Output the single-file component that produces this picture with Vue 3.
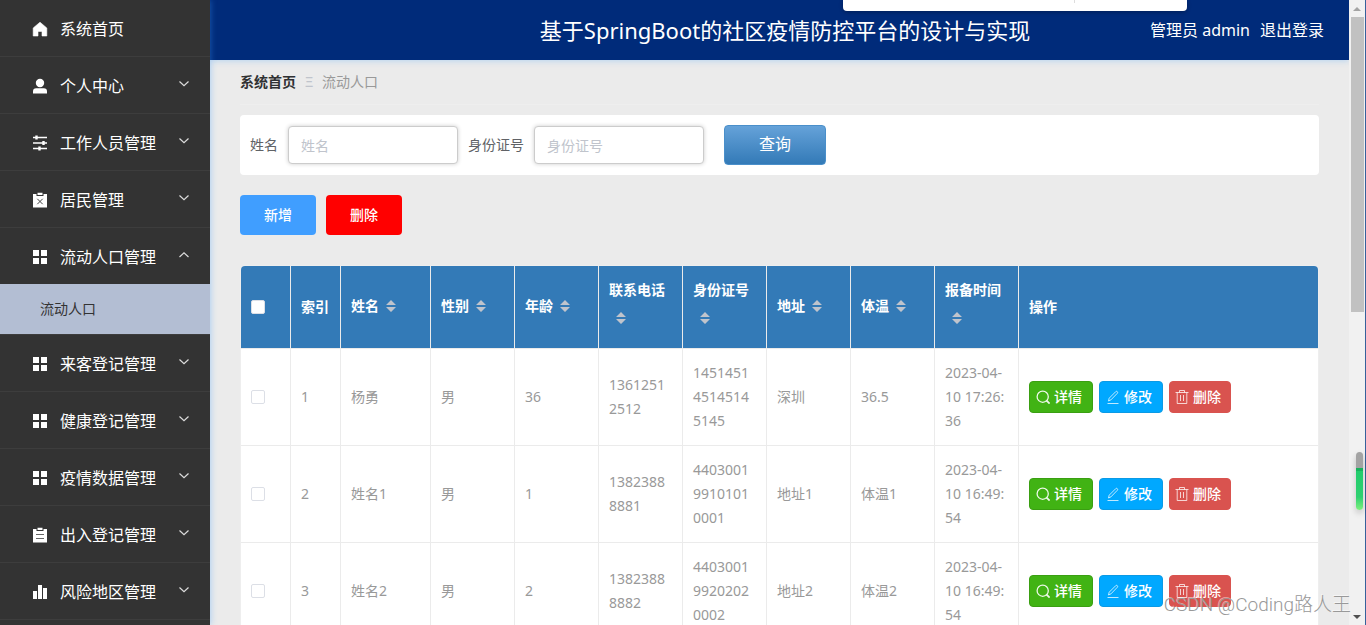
<script setup>
import { ref } from 'vue'

const menu = [
  { label: '系统首页', icon: 'home' },
  { label: '个人中心', icon: 'user', sub: true },
  { label: '工作人员管理', icon: 'sliders', sub: true },
  { label: '居民管理', icon: 'clip-x', sub: true },
  { label: '流动人口管理', icon: 'grid', sub: true, children: ['流动人口'] },
  { label: '来客登记管理', icon: 'grid', sub: true },
  { label: '健康登记管理', icon: 'grid', sub: true },
  { label: '疫情数据管理', icon: 'grid', sub: true },
  { label: '出入登记管理', icon: 'clip', sub: true },
  { label: '风险地区管理', icon: 'bars', sub: true },
]
const columns = ['姓名', '性别', '年龄', '联系电话', '身份证号', '地址', '体温', '报备时间']
const rows = [
  ['1', '杨勇', '男', '36', '13612512512', '145145145145145145', '深圳', '36.5', '2023-04-10 17:26:36'],
  ['2', '姓名1', '男', '1', '13823888881', '440300199101010001', '地址1', '体温1', '2023-04-10 16:49:54'],
  ['3', '姓名2', '男', '2', '13823888882', '440300199202020002', '地址2', '体温2', '2023-04-10 16:49:54'],
]
const name = ref('')
const idNo = ref('')
</script>

<template>
  <div class="layout">
    <nav class="sidebar">
      <ul>
        <li v-for="m in menu" :key="m.label">
          <a href="#" class="item">
            <svg class="icon" viewBox="0 0 16 16" aria-hidden="true">
              <path v-if="m.icon === 'home'" d="M8 1.2 1.2 7v8H6v-4.6h4V15h4.8V7z" fill="#fff" stroke="#fff" stroke-width=".6" stroke-linejoin="round" />
              <path v-else-if="m.icon === 'user'" d="M8 .8a4.2 4.2 0 1 1 0 8.400A4.200 4.200 0 0 1 8 .8zM1 15.500V13.500Q1 10.300 4.200 10.300H11.800Q15 10.300 15 13.500V15.500z" fill="#fff" />
              <g v-else-if="m.icon === 'sliders'" stroke="#fff" stroke-width="1.500" fill="none">
                <path d="M1 2.500h14M1 8h14M1 13.500h14" /><path d="M4.500 .5v4M11.500 6v4M7.500 11.500v4" stroke-width="2.400" />
              </g>
              <g v-else-if="m.icon === 'clip-x'">
                <path d="M1 2H4.500V4h7V2H15v13.500H1zM5.500 .8h5v2.200h-5z" fill="#fff" /><path d="m5.300 6.800 5.400 5.400m0-5.400-5.400 5.400" stroke="#444" stroke-width="1" />
              </g>
              <g v-else-if="m.icon === 'clip'">
                <path d="M1 2H4.500V4h7V2H15v13.500H1zM5.500 .8h5v2.200h-5z" fill="#fff" /><path d="M4 7.500h8M4 11.500h8" stroke="#666" />
              </g>
              <path v-else-if="m.icon === 'grid'" d="M1 1h6v6H1zM9 1h6v6H9zM1 9h6v6H1zM9 9h6v6H9z" fill="#fff" />
              <path v-else d="M1 7h4v8H1zM6 1h4v14H6zM11 4h4v11h-4z" fill="#fff" />
            </svg>
            <span class="label">{{ m.label }}</span>
            <svg v-if="m.sub" class="arrow" viewBox="0 0 12 12" aria-hidden="true">
              <path :d="m.children ? 'M1.500 8 6 3.800 10.500 8' : 'M1.500 3.500 6 7.700 10.500 3.500'" fill="none" stroke="#ddd" stroke-width="1.200" />
            </svg>
          </a>
          <a v-for="c in m.children" :key="c" href="#" class="child">{{ c }}</a>
        </li>
      </ul>
    </nav>

    <div class="page">
      <header class="header">
        <h1>基于SpringBoot的社区疫情防控平台的设计与实现</h1>
        <div class="account">
          <span>管理员 admin</span>
          <a href="#">退出登录</a>
        </div>
      </header>

      <main class="main">
        <div class="crumbs">
          <a href="#">系统首页</a><span class="sep">Ξ</span><span class="here">流动人口</span>
        </div>

        <form class="search" @submit.prevent>
          <label for="f-name">姓名</label>
          <input id="f-name" v-model="name" type="text" placeholder="姓名" />
          <label for="f-id">身份证号</label>
          <input id="f-id" v-model="idNo" type="text" placeholder="身份证号" />
          <button type="submit">查询</button>
        </form>

        <div class="actions">
          <button type="button" class="add">新增</button>
          <button type="button" class="remove">删除</button>
        </div>

        <table>
          <colgroup>
            <col class="c-small" /><col class="c-small" /><col class="c-name" />
            <col v-for="n in 7" :key="n" class="c-mid" />
            <col />
          </colgroup>
          <thead>
            <tr>
              <th><input type="checkbox" aria-label="全选" /></th>
              <th>索引</th>
              <th v-for="c in columns" :key="c">
                {{ c }}<span class="caret"><svg viewBox="0 0 10 12" aria-hidden="true"><path d="M0 5 5 0l5 5zM0 7h10l-5 5z" fill="#c0c4cc" /></svg></span>
              </th>
              <th>操作</th>
            </tr>
          </thead>
          <tbody>
            <tr v-for="r in rows" :key="r[0]">
              <td><input type="checkbox" :aria-label="'选择 ' + r[1]" /></td>
              <td v-for="(v, i) in r" :key="i">{{ v }}</td>
              <td>
                <div class="ops">
                  <button type="button" class="view">
                    <svg viewBox="0 0 14 14" aria-hidden="true"><circle cx="6.700" cy="6.700" r="5.600" /><path d="m10.600 10.600 3 3" stroke-width="1.800" /></svg>详情
                  </button>
                  <button type="button" class="edit">
                    <svg viewBox="0 0 14 14" aria-hidden="true"><path d="M1.500 13.500h11M2.500 11 3.200 8.200 9.700 1.700q.8-.8 1.600 0t0 1.600L4.900 9.900z" /></svg>修改
                  </button>
                  <button type="button" class="del">
                    <svg viewBox="0 0 14 14" aria-hidden="true"><path d="M.5 2.500h13M4.500 2.500V.5h5v2M2.200 2.500v11h9.600v-11M5.500 5v6M8.500 5v6" /></svg>删除
                  </button>
                </div>
              </td>
            </tr>
          </tbody>
        </table>
      </main>
    </div>

    <div class="scroll">
      <span class="up"></span>
      <span class="thumb"></span>
      <span class="down"></span>
    </div>

    <div class="popup"><span></span></div>
    <div class="meter"></div>
    <div class="mark">CSDN @Coding路人王</div>
  </div>
</template>

<style>
body {
  margin: 0;
  overflow: hidden;
}
</style>

<style scoped>
.layout {
  position: relative;
  display: flex;
  height: 100vh;
  overflow: hidden;
  background: #ebebeb;
  font: 14px/24px "Noto Sans", "Noto Sans CJK SC", sans-serif;
  color: #606266;
}
* {
  box-sizing: border-box;
}
a {
  color: inherit;
  text-decoration: none;
}
button,
input {
  font: inherit;
}
button {
  padding: 0;
  border: 0;
  border-radius: 4px;
  color: #fff;
  cursor: pointer;
}
.sidebar {
  flex: none;
  width: 210px;
  background: #333;
  box-shadow: 1px 0 6px rgba(64, 158, 255, 0.35);
  z-index: 1;
}
.sidebar ul {
  margin: 0;
  padding: 0;
  list-style: none;
}
.sidebar li {
  border-bottom: 1px solid #3d3d3d;
}
.item {
  display: flex;
  align-items: center;
  height: 56px;
  padding: 2px 20px 0 32px;
  font-size: 16px;
  color: #fff;
}
.icon {
  width: 16px;
  height: 16px;
  margin-right: 12px;
}
.label {
  flex: 1;
}
.arrow {
  width: 12px;
  height: 12px;
  margin-bottom: 4px;
}
.child {
  display: block;
  padding-left: 40px;
  line-height: 50px;
  background: #b3bed3;
  color: #333;
}
.page {
  flex: 1;
  min-width: 0;
}
.header {
  display: grid;
  grid-template-columns: 1fr auto 1fr;
  align-items: center;
  height: 60px;
  padding: 0 25px 0 36px;
  background: #002b7a;
  box-shadow: 0 1px 6px rgba(64, 158, 255, 0.3);
  color: #fff;
}
.header h1 {
  grid-column: 2;
  margin: 0;
  font-size: 22px;
  font-weight: 400;
}
.account {
  display: flex;
  justify-content: flex-end;
  gap: 10px;
  font-size: 16px;
}
.main {
  padding: 10px 30px;
}
.crumbs {
  display: flex;
  height: 35px;
  border-bottom: 1px solid #eee;
}
.crumbs a {
  font-weight: 700;
  color: #303133;
}
.sep {
  width: 26px;
  text-align: center;
  color: #c0c4cc;
}
.here {
  color: #999;
}
.search {
  display: flex;
  align-items: center;
  gap: 10px;
  height: 60px;
  margin-top: 10px;
  padding: 0 10px;
  border-radius: 4px;
  background: #fff;
}
.search input {
  width: 170px;
  height: 38px;
  padding: 0 12px;
  border: 1px solid #ccc;
  border-radius: 4px;
  box-shadow: 0 0 4px rgba(0, 0, 0, 0.2);
}
.search input::placeholder {
  color: #c0c4cc;
}
.search button {
  width: 102px;
  height: 40px;
  margin-left: 10px;
  padding-bottom: 2px;
  border: 1px solid #4a8fca;
  background: linear-gradient(#65a2d9, #337ab7);
  font-size: 16px;
}
.actions {
  display: flex;
  gap: 10px;
  margin: 20px 0 30px;
}
.actions button {
  width: 76px;
  height: 40px;
  font-weight: 500;
}
.actions .add {
  background: #409eff;
}
.actions .remove {
  background: #f00;
}
table {
  width: 100%;
  table-layout: fixed;
  border-collapse: separate;
  border-spacing: 0;
  border: 1px solid #eee;
  border-radius: 5px;
  overflow: hidden;
  background: #fff;
}
.c-small {
  width: 50px;
}
.c-name {
  width: 90px;
}
.c-mid {
  width: 84px;
}
th,
td {
  padding: 12px 10px;
  border-right: 1px solid #ebebeb;
  border-bottom: 1px solid #ebebeb;
  text-align: left;
  vertical-align: middle;
  word-break: break-all;
}
th:last-child,
td:last-child {
  border-right: 0;
}
th {
  background: #337ab7;
  color: #fff;
  font-weight: 700;
}
td {
  color: #999;
}
.caret {
  display: inline-flex;
  align-items: center;
  justify-content: center;
  width: 24px;
  height: 34px;
  padding-bottom: 2px;
  vertical-align: middle;
}
.caret svg {
  width: 10px;
  height: 12px;
}
table input {
  appearance: none;
  display: block;
  width: 14px;
  height: 14px;
  margin: 0;
  border: 1px solid #dcdfe6;
  border-radius: 2px;
  background: #fff;
}
.ops {
  display: flex;
  gap: 6px;
}
.ops button {
  display: flex;
  align-items: center;
  gap: 4px;
  width: 64px;
  height: 32px;
  padding-left: 6px;
  border: 1px solid;
  font-weight: 500;
}
.ops svg {
  width: 14px;
  height: 14px;
  fill: none;
  stroke: rgba(255, 255, 255, 0.75);
  stroke-width: 1;
}
.ops .view {
  background: #41b314;
  border-color: #3a9f12;
}
.ops .view svg {
  stroke: rgba(255, 255, 255, 0.9);
  stroke-width: 1.3;
}
.ops .edit {
  background: #00a8ff;
  border-color: #0b9ae5;
}
.ops .del {
  width: 62px;
  padding-left: 5px;
  background: #d9534f;
  border-color: #d9534f;
}
.scroll {
  flex: none;
  display: flex;
  flex-direction: column;
  align-items: center;
  width: 17px;
  padding: 7px 2px 6px;
  border-right: 1px solid #36619b;
  background: #f1f1f1;
}
.up,
.down {
  border: 4px solid transparent;
}
.up {
  border-top: 0;
  border-bottom-color: #a3a3a3;
}
.down {
  margin-top: auto;
  border-bottom: 0;
  border-top-color: #505050;
}
.thumb {
  width: 13px;
  height: 295px;
  margin-top: 6px;
  background: #c1c1c1;
}
.popup {
  position: absolute;
  z-index: 2;
  top: 0;
  right: 179px;
  width: 344px;
  height: 11px;
  border-radius: 0 0 4px 4px;
  background: #fff;
  box-shadow: 0 1px 4px rgba(0, 0, 0, 0.3);
}
.popup span {
  display: block;
  width: 1px;
  height: 3px;
  margin-left: 231px;
  background: #ddd;
}
.meter {
  position: absolute;
  right: 3px;
  bottom: 115px;
  width: 7px;
  height: 58px;
  border-radius: 4px;
  background: linear-gradient(#a3a3a3 16px, #17b35c 16px, #17b35c 19px, #22cc6c 19px, #2fd070 45px, #7df07d);
  box-shadow: 0 3px 6px rgba(0, 0, 0, 0.2);
}
.mark {
  position: absolute;
  right: 15px;
  bottom: 6px;
  font-family: Roboto, "Noto Sans CJK SC", sans-serif;
  font-size: 19px;
  font-weight: 300;
  line-height: 28px;
  color: #999;
  text-shadow: -1px -1px 0 rgba(255, 255, 255, 0.5);
  pointer-events: none;
}
</style>
